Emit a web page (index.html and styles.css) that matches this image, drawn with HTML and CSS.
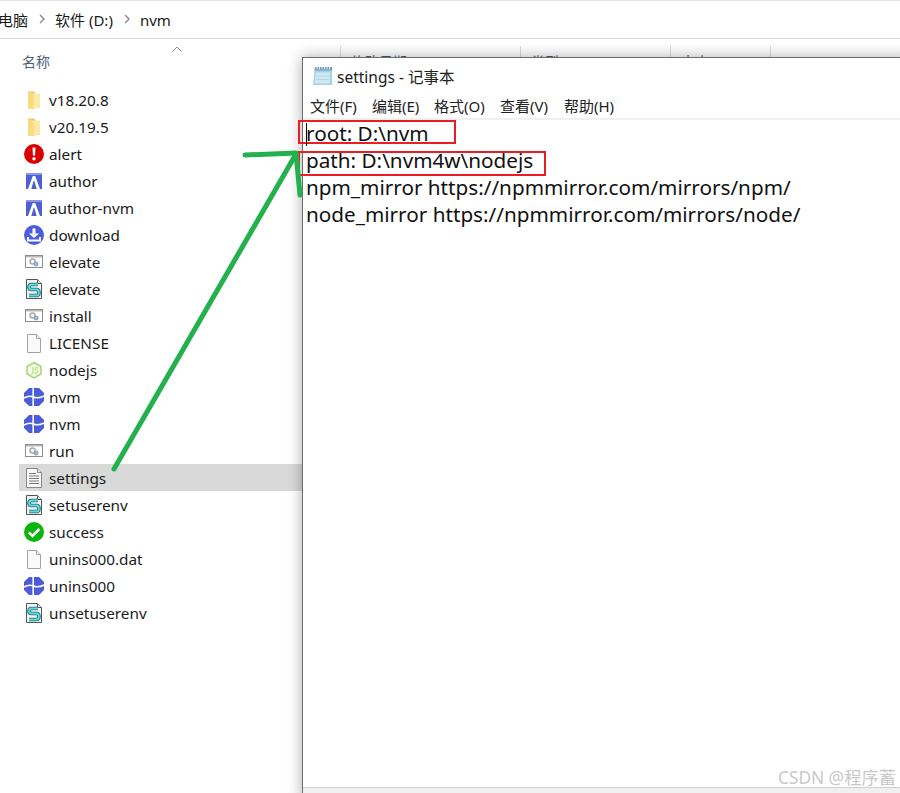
FILE: index.html
```html
<!DOCTYPE html>
<html lang="zh-CN">
<head>
<meta charset="utf-8">
<title>settings - 记事本</title>
<link rel="stylesheet" href="styles.css">
</head>
<body>
<svg class="defs" width="0" height="0" aria-hidden="true">
  <defs>
    <symbol id="i-folder" viewBox="0 0 22 22">
      <path d="M5 2.500h6l1.500 2v15H5z" fill="#e9c565"/>
      <path d="M8 4.500h9v14.500H8z" fill="#fde8a6"/>
      <path d="M5 3.500h3l2.500 2.500v14.500L5 19z" fill="#f8da7f"/>
    </symbol>
    <symbol id="i-alert" viewBox="0 0 22 22">
      <circle cx="11" cy="11" r="10" fill="#d80000"/>
      <path d="M9.500 4.500h3l-.4 8H9.900z" fill="#fff"/>
      <circle cx="11" cy="15.800" r="1.700" fill="#fff"/>
    </symbol>
    <symbol id="i-author" viewBox="0 0 22 22">
      <rect x="3" y="3" width="16" height="16" fill="#4e5fd6"/>
      <rect x="3" y="3" width="16" height="2" fill="#8b97e6"/>
      <path d="M5 19 9.800 6h2.400L17 19h-3.300L11.400 11h-.8L8.300 19z" fill="#fff"/>
    </symbol>
    <symbol id="i-download" viewBox="0 0 22 22">
      <circle cx="11" cy="11" r="10" fill="#4a5fd9"/>
      <path d="M9.500 4.500h3v5H16l-5 4.500-5-4.500h3.500z" fill="#fff"/>
      <path d="M5 13v3.500h12V13" fill="none" stroke="#fff" stroke-width="1.800"/>
    </symbol>
    <symbol id="i-exe" viewBox="0 0 22 22">
      <rect x="2.500" y="4.500" width="17" height="12" fill="#fff" stroke="#8d8d8d"/>
      <rect x="3" y="5" width="16" height="1.500" fill="#b9b9b9"/>
      <circle cx="9.500" cy="10.500" r="2.500" fill="none" stroke="#a9a9a9" stroke-width="1.500"/>
      <circle cx="13" cy="13" r="2" fill="#9fc0dc" stroke="#7d9cb8" stroke-width="1"/>
    </symbol>
    <symbol id="i-script" viewBox="0 0 22 22">
      <path d="M3.500 1.500h11l4 4v15h-15z" fill="#f4f4f4" stroke="#555"/>
      <path d="M14.500 1.500v4h4" fill="#ddd" stroke="#555"/>
      <path d="M15 6.500H8.500Q6 6.500 6 9t2.500 2.500h5q2.500 0 2.500 3t-2.500 3H6" fill="none" stroke="#1f6f7a" stroke-width="3.600"/>
      <path d="M15 6.500H8.500Q6 6.500 6 9t2.500 2.500h5q2.500 0 2.500 3t-2.500 3H6" fill="none" stroke="#63d8dc" stroke-width="1.800"/>
    </symbol>
    <symbol id="i-page" viewBox="0 0 22 22">
      <path d="M4.500 2.500h9l4 4v14h-13z" fill="#fafafa" stroke="#a3a3a3"/>
      <path d="M13.500 2.500v4h4" fill="#eee" stroke="#a3a3a3"/>
    </symbol>
    <symbol id="i-node" viewBox="0 0 22 22">
      <path d="M11 3.500 18 7.500v7.500L11 19l-7-4V7.500z" fill="#f4fbe9" stroke="#a5d86f" stroke-width="1.500"/>
      <path d="M10 8v6q0 1.500-2 1.300M15 9q-2.500-1.200-2.800.5t2 1.700q1.600 1.400-.3 2.900-1 .5-2.300-.2" fill="none" stroke="#a5d86f"/>
    </symbol>
    <symbol id="i-nvm" viewBox="0 0 22 22">
      <path d="M6 2h10l5 5v8l-5 5H6l-5-5V7z" fill="#4c5bd8"/>
      <path d="M10.200 1v20" stroke="#fff" stroke-width="1.600"/>
      <path d="M1 12q5-3 9.500-1t10.500-1" fill="none" stroke="#fff" stroke-width="1.600"/>
    </symbol>
    <symbol id="i-text" viewBox="0 0 22 22">
      <path d="M3.500 1.500h11l4 4v15h-15z" fill="#f8f8f8" stroke="#888"/>
      <path d="M14.500 1.500v4h4" fill="#e6e6e6" stroke="#888"/>
      <path d="M6 6.500h7M6 9h10M6 11.500h10M6 14h10M6 16.500h10" stroke="#7c7c7c"/>
    </symbol>
    <symbol id="i-success" viewBox="0 0 22 22">
      <circle cx="11" cy="11" r="10" fill="#0db40d"/>
      <path d="M5.800 11.300 9.500 15l6.800-7" fill="none" stroke="#fff" stroke-width="2.600"/>
    </symbol>
    <symbol id="i-notepad" viewBox="0 0 22 22">
      <path d="M4 2h17v18H2z" fill="#a5d2e6"/>
      <path d="M4 2h17v3.500H3.500z" fill="#6f9fb8"/>
      <path d="M5 7.500h14l-.2 11H3.500z" fill="#cfe9f3"/>
      <path d="M6 1v3.500M8.500 1v3.500M11 1v3.500M13.500 1v3.500M16 1v3.500M18.500 1v3.500" stroke="#eef4f7"/>
      <path d="M5 11h14M5 14.500h13.500" stroke="#a9cfdf" stroke-width=".7"/>
    </symbol>
  </defs>
</svg>

<main class="desktop">
  <section class="explorer">
    <nav class="crumbs">
      <span class="crumb">电脑</span>
      <svg class="chev" viewBox="0 0 8 10"><path d="M2 1l4 4-4 4" fill="none" stroke="#8a8a8a" stroke-width="1.400"/></svg>
      <span class="crumb">软件 (D:)</span>
      <svg class="chev" viewBox="0 0 8 10"><path d="M2 1l4 4-4 4" fill="none" stroke="#8a8a8a" stroke-width="1.400"/></svg>
      <span class="crumb">nvm</span>
    </nav>
    <header class="cols">
      <div class="col col-name">名称
        <svg class="sort" viewBox="0 0 10 6"><path d="M.5 5.500 5 1l4.500 4.500" fill="none" stroke="#8a8a8a"/></svg>
      </div>
      <div class="col col-date">修改日期</div>
      <div class="col col-type">类型</div>
      <div class="col col-size">大小</div>
      <div class="col col-rest"></div>
    </header>
    <ul class="files">
      <li class="file"><svg class="ico"><use href="#i-folder"/></svg>v18.20.8</li>
      <li class="file"><svg class="ico"><use href="#i-folder"/></svg>v20.19.5</li>
      <li class="file"><svg class="ico"><use href="#i-alert"/></svg>alert</li>
      <li class="file"><svg class="ico"><use href="#i-author"/></svg>author</li>
      <li class="file"><svg class="ico"><use href="#i-author"/></svg>author-nvm</li>
      <li class="file"><svg class="ico"><use href="#i-download"/></svg>download</li>
      <li class="file"><svg class="ico"><use href="#i-exe"/></svg>elevate</li>
      <li class="file"><svg class="ico"><use href="#i-script"/></svg>elevate</li>
      <li class="file"><svg class="ico"><use href="#i-exe"/></svg>install</li>
      <li class="file"><svg class="ico"><use href="#i-page"/></svg>LICENSE</li>
      <li class="file"><svg class="ico"><use href="#i-node"/></svg>nodejs</li>
      <li class="file"><svg class="ico"><use href="#i-nvm"/></svg>nvm</li>
      <li class="file"><svg class="ico"><use href="#i-nvm"/></svg>nvm</li>
      <li class="file"><svg class="ico"><use href="#i-exe"/></svg>run</li>
      <li class="file is-selected"><svg class="ico"><use href="#i-text"/></svg>settings</li>
      <li class="file"><svg class="ico"><use href="#i-script"/></svg>setuserenv</li>
      <li class="file"><svg class="ico"><use href="#i-success"/></svg>success</li>
      <li class="file"><svg class="ico"><use href="#i-page"/></svg>unins000.dat</li>
      <li class="file"><svg class="ico"><use href="#i-nvm"/></svg>unins000</li>
      <li class="file"><svg class="ico"><use href="#i-script"/></svg>unsetuserenv</li>
    </ul>
  </section>

  <section class="notepad">
    <div class="titlebar"><svg class="np-ico"><use href="#i-notepad"/></svg><span>settings - 记事本</span></div>
    <div class="menu">
      <span class="m1">文件(F)</span><span class="m2">编辑(E)</span><span class="m3">格式(O)</span><span class="m4">查看(V)</span><span>帮助(H)</span>
    </div>
    <div class="editor">
      <div class="line">root: D:\nvm</div>
      <div class="line">path: D:\nvm4w\nodejs</div>
      <div class="line">npm_mirror https://npmmirror.com/mirrors/npm/</div>
      <div class="line">node_mirror https://npmmirror.com/mirrors/node/</div>
    </div>
    <div class="statusbar"></div>
  </section>

  <svg class="marks" viewBox="0 0 900 793" width="900" height="793" aria-hidden="true">
    <rect x="299" y="121" width="156" height="22" fill="none" stroke="#ed1c24" stroke-width="2"/>
    <rect x="299" y="152" width="246" height="23" fill="none" stroke="#ed1c24" stroke-width="2"/>
    <path d="M306.500 123v23" stroke="#000" stroke-width="1"/>
    <g fill="none" stroke="#22b14c" stroke-width="5" stroke-linecap="round" stroke-linejoin="round">
      <path d="M114 469 296 154"/>
      <path d="M245 155 296 153 300 195"/>
    </g>
  </svg>

  <div class="watermark">CSDN @程序蓄</div>
</main>
</body>
</html>
```
FILE: styles.css
```css
* { box-sizing: border-box; }
html, body { margin: 0; padding: 0; background: #fff; }
body {
  width: 900px;
  height: 793px;
  overflow: hidden;
  font-family: "Noto Sans", "Noto Sans CJK SC", sans-serif;
  color: #1a1a1a;
}
.defs { position: absolute; }
.desktop { position: relative; width: 900px; height: 793px; overflow: hidden; }

.explorer { display: flex; flex-direction: column; height: 100%; border-top: 1px solid #e3e3e3; }
.crumbs {
  display: flex;
  align-items: center;
  height: 38px;
  flex: none;
  border-bottom: 1px solid #d9d9d9;
  font-size: 15px;
  line-height: 38px;
  margin-left: -2px;
}
.chev { width: 8px; height: 10px; margin: 0 9px 2px 10px; }
.crumb { white-space: nowrap; }

.cols { display: flex; height: 47px; flex: none; font-size: 14px; color: #4c607a; }
.col {
  position: relative;
  padding: 13px 0 0 10px;
  line-height: 20px;
}
.col-name { width: 340px; padding-left: 22px; }
.col-date { width: 180px; }
.col-type { width: 150px; }
.col-size { width: 100px; }
.col-rest { flex: 1; }
.col-date, .col-type, .col-size, .col-rest {
  border-left: 1px solid #dcdcdc;
  margin-top: 7px;
  padding-top: 6px;
  height: 11px;
  overflow: hidden;
}
.sort { position: absolute; left: 172px; top: 7px; width: 10px; height: 6px; }

.files { list-style: none; margin: 0 0 0 19px; padding: 0; width: 283px; }
.file {
  display: flex;
  align-items: center;
  height: 27px;
  font-size: 15.300px;
  padding-left: 4px;
  color: #1a1a1a;
}
.file.is-selected { background: #d9d9d9; }
.ico { width: 22px; height: 22px; margin-right: 4px; flex: none; }

.notepad {
  position: absolute;
  left: 302px;
  top: 57px;
  width: 610px;
  height: 745px;
  background: #fff;
  border: 1px solid #6d6d6d;
  box-shadow: 0 0 14px rgba(0, 0, 0, .32);
  display: flex;
  flex-direction: column;
}
.titlebar {
  display: flex;
  align-items: center;
  height: 36px;
  flex: none;
  padding-left: 8px;
  font-size: 15.500px;
  color: #222;
}
.np-ico { width: 22px; height: 22px; margin-right: 4px; }
.menu {
  display: flex;
  height: 26px;
  flex: none;
  padding-left: 7px;
  font-size: 15px;
  line-height: 25px;
  color: #222;
  border-bottom: 2px solid #f0f0f0;
}
.menu span { white-space: nowrap; }
.m1 { width: 62px; }
.m2 { width: 62px; }
.m3 { width: 66px; }
.m4 { width: 64px; }
.editor { flex: 1; padding: 0 0 0 3px; font-size: 20.700px; color: #111; }
.line { height: 27px; line-height: 27px; white-space: nowrap; }
.statusbar { height: 14px; flex: none; background: #f0f0f0; border-top: 1px solid #d0d0d0; }

.marks { position: absolute; left: 0; top: 0; pointer-events: none; }
.watermark {
  position: absolute;
  right: 4px;
  top: 767px;
  font-size: 17.300px;
  line-height: 22px;
  color: #c9c9c9;
  white-space: nowrap;
}
```
